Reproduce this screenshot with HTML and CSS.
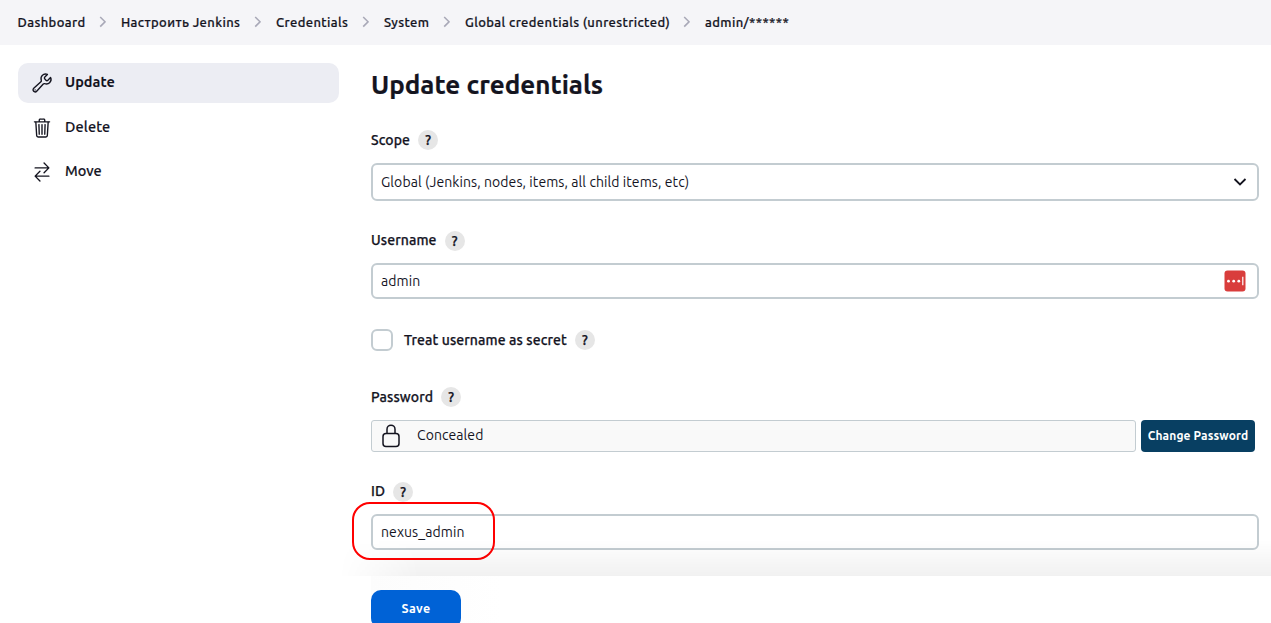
FILE: index.html
```html
<!DOCTYPE html>
<html lang="ru">
<head>
<meta charset="utf-8">
<title>Update credentials</title>
<link rel="stylesheet" href="styles.css">
</head>
<body>
<nav class="breadcrumbs">
  <a class="c-dashboard">Dashboard</a><svg class="sep" viewBox="0 0 7 12"><path d="M1.2 1l4.8 4.8-4.8 4.8"/></svg>
  <a class="c-manage">Настроить Jenkins</a><svg class="sep" viewBox="0 0 7 12"><path d="M1.2 1l4.8 4.8-4.8 4.8"/></svg>
  <a class="c-credentials">Credentials</a><svg class="sep" viewBox="0 0 7 12"><path d="M1.2 1l4.8 4.8-4.8 4.8"/></svg>
  <a class="c-system">System</a><svg class="sep" viewBox="0 0 7 12"><path d="M1.2 1l4.8 4.8-4.8 4.8"/></svg>
  <a class="c-global">Global credentials (unrestricted)</a><svg class="sep" viewBox="0 0 7 12"><path d="M1.2 1l4.8 4.8-4.8 4.8"/></svg>
  <a class="c-admin">admin/******</a>
</nav>
<div class="page">
  <aside class="tasks">
    <a class="task active"><svg class="icon" viewBox="0 0 512 512"><path d="M393.87 190a32.1 32.1 0 0 1-45.25 0l-26.57-26.57a32.09 32.09 0 0 1 0-45.26L382.19 58a1 1 0 0 0-.3-1.64c-38.82-16.64-89.15-8.16-121.11 23.57-30.58 30.35-32.32 76-21.12 115.84a31.93 31.93 0 0 1-9.06 32.08L64 380a48.17 48.17 0 1 0 68 68l153.86-167a31.93 31.93 0 0 1 31.6-9.13c39.54 10.59 84.54 8.6 114.72-21.19 32.49-32 39.5-88.56 23.75-120.93a1 1 0 0 0-1.6-.26z"/><circle class="dot" cx="96" cy="416" r="16"/></svg><span class="t-update">Update</span></a>
    <a class="task"><svg class="icon" viewBox="0 0 512 512"><path d="M112 112l20 320c.95 18.49 14.4 32 32 32h184c17.67 0 30.87-13.51 32-32l20-320M80 112h352M192 112V72a23.93 23.93 0 0 1 24-24h80a23.93 23.93 0 0 1 24 24v40M256 176v224M184 176l8 224M328 176l-8 224"/></svg><span class="t-delete">Delete</span></a>
    <a class="task"><svg class="icon" viewBox="0 0 512 512"><path d="M304 48l112 112-112 112M398.87 160H96M208 464L96 352l112-112M114 352h302"/></svg><span class="t-move">Move</span></a>
  </aside>
  <main>
    <h1>Update credentials</h1>
    <form>
      <div class="label l-scope"><span>Scope</span><a class="help">?</a></div>
      <div class="field select"><span class="v-scope">Global (Jenkins, nodes, items, all child items, etc)</span><svg class="chevron" viewBox="0 0 14 8"><path d="M1.5 1l5.5 5.5L12.500 1"/></svg></div>
      <div class="label l-user"><span>Username</span><a class="help">?</a></div>
      <div class="field"><span class="v-user">admin</span><svg class="manager" viewBox="0 0 22 22"><rect x=".5" y=".5" width="21" height="21" rx="3"/><g class="mark"><circle cx="4.500" cy="11.200" r="1.400"/><circle cx="9.700" cy="11.200" r="1.400"/><circle cx="14.800" cy="11.200" r="1.400"/><path d="M18.200 6.800h1.200v8.500h-1.200z"/></g></svg></div>
      <div class="label l-secret"><i class="checkbox"></i><span>Treat username as secret</span><a class="help">?</a></div>
      <div class="label l-password"><span>Password</span><a class="help">?</a></div>
      <div class="password">
        <div class="concealed"><svg class="lock" viewBox="0 0 18 24"><path d="M5 9.500V5.200a4 4 0 0 1 8 0V9.500M4 9.500h10a3 3 0 0 1 3 3v7a3 3 0 0 1-3 3H4a3 3 0 0 1-3-3v-7a3 3 0 0 1 3-3z"/></svg><span class="v-concealed">Concealed</span></div>
        <button type="button" class="change">Change Password</button>
      </div>
      <div class="label l-id"><span>ID</span><a class="help">?</a></div>
      <div class="field id-field"><span class="v-id">nexus_admin</span><i class="annotation"></i></div>
    </form>
    <footer><button type="button" class="save">Save</button></footer>
  </main>
</div>
</body>
</html>
```
FILE: styles.css
```css
* { box-sizing: border-box; }
body { margin: 0; height: 623px; overflow: hidden; background: #fff; color: #14141f; font: 14px "Ubuntu", "Noto Sans", sans-serif; }
span, a { white-space: nowrap; }
button { border: 0; color: #fff; font-family: inherit; font-weight: 700; white-space: nowrap; }
svg { display: block; flex: none; fill: none; stroke: currentColor; }
.breadcrumbs { display: flex; align-items: center; height: 45px; padding: 0 0 1px 17.500px; background: #f5f5f8; font-size: 13px; font-weight: 500; letter-spacing: 0.390px; -webkit-text-stroke: 0.200px; }
.breadcrumbs a { flex: none; }
.sep { width: 7px; height: 12px; margin: 0 15px 0 13px; color: #a9a9b8; stroke-width: 1.6; }
.c-dashboard { width: 68.500px; }
.c-manage { width: 120px; }
.c-credentials { width: 73px; }
.c-system { width: 46px; }
.c-global { width: 205px; }
.page { display: grid; grid-template-columns: 321px 900px; column-gap: 32px; padding-left: 18px; height: 578px; }
.tasks { display: flex; flex-direction: column; gap: 4.500px; padding-top: 18px; }
.task { display: flex; align-items: center; gap: 12px; height: 40px; padding-left: 13px; border-radius: 10px; font-size: 14.500px; font-weight: 500; -webkit-text-stroke: 0.150px; }
.task span { padding-bottom: 3px; }
.task .t-delete { padding-bottom: 2px; letter-spacing: 0.100px; }
.active { background: #ecedf3; font-weight: 700; -webkit-text-stroke: 0; }
.icon { width: 22px; height: 22px; stroke-width: 32; stroke-linecap: round; stroke-linejoin: round; }
.dot { fill: currentColor; stroke: none; }
main { display: flex; flex-direction: column; min-width: 0; }
h1 { margin: 0; padding-top: 22px; height: 85px; font-size: 26px; line-height: 36px; font-weight: 700; white-space: nowrap; -webkit-text-stroke: 0.200px; }
form { display: flex; flex-direction: column; width: 888px; height: 446px; }
.label { display: flex; align-items: center; gap: 8px; height: 20px; font-weight: 500; letter-spacing: 0.100px; -webkit-text-stroke: 0.250px; }
.label span { line-height: 20px; }
.l-user span, .l-id span { padding-bottom: 2px; }
.help { width: 20px; height: 20px; border-radius: 50%; background: #e6e6e6; font-size: 14px; line-height: 20px; font-weight: 500; text-align: center; letter-spacing: 0; }
.field { display: flex; align-items: center; justify-content: space-between; height: 36px; padding: 0 11px 1px 8px; border: 2px solid #c3ccd1; border-radius: 6px; background: #fff; letter-spacing: 0.080px; }
.select { height: 38px; margin: 13px 0 30px; }
.chevron { width: 14px; height: 8px; margin-right: -1px; stroke-width: 1.8; }
.l-user { margin-bottom: 12px; }
.manager { width: 22px; height: 22px; stroke: none; }
.manager rect { fill: #d93d3c; }
.mark { fill: #fff; }
.l-secret { margin: 31px 0 37px; }
.checkbox { width: 22px; height: 22px; margin-right: 3px; border: 2px solid #c3ccd1; border-radius: 6px; }
.password { display: flex; gap: 5px; height: 32px; margin: 13px 0 30px; }
.concealed { display: flex; align-items: center; width: 765px; padding-left: 10px; border: 1px solid #c3ccd1; border-radius: 3px; background: #f9f9f9; }
.lock { width: 18px; height: 24px; stroke-width: 1.5; }
.v-concealed { margin-left: 17px; padding-bottom: 2px; letter-spacing: 0.080px; }
.change { width: 114px; padding: 0 0 2px; border-radius: 4px; background: #083f62; font-size: 12px; letter-spacing: 0.120px; }
.id-field { position: relative; margin-top: 12px; }
.annotation { position: absolute; left: -21px; top: -14px; width: 143px; height: 58px; border: 2px solid #ff0000; border-radius: 18px; }
footer { position: relative; height: 47px; padding-top: 14px; background: linear-gradient(to right, #fcfcfc, #fff 130px); }
footer::before { content: ""; position: absolute; left: -32px; right: 0; top: -36px; height: 36px; background: linear-gradient(to bottom, #0000, #0000000e); mask-image: linear-gradient(to right, transparent, #000 80px); }
.save { width: 90px; height: 38px; padding: 0 0 2px; border-radius: 10px; background: #0062d6; font-size: 12.500px; letter-spacing: 0.300px; }
```
